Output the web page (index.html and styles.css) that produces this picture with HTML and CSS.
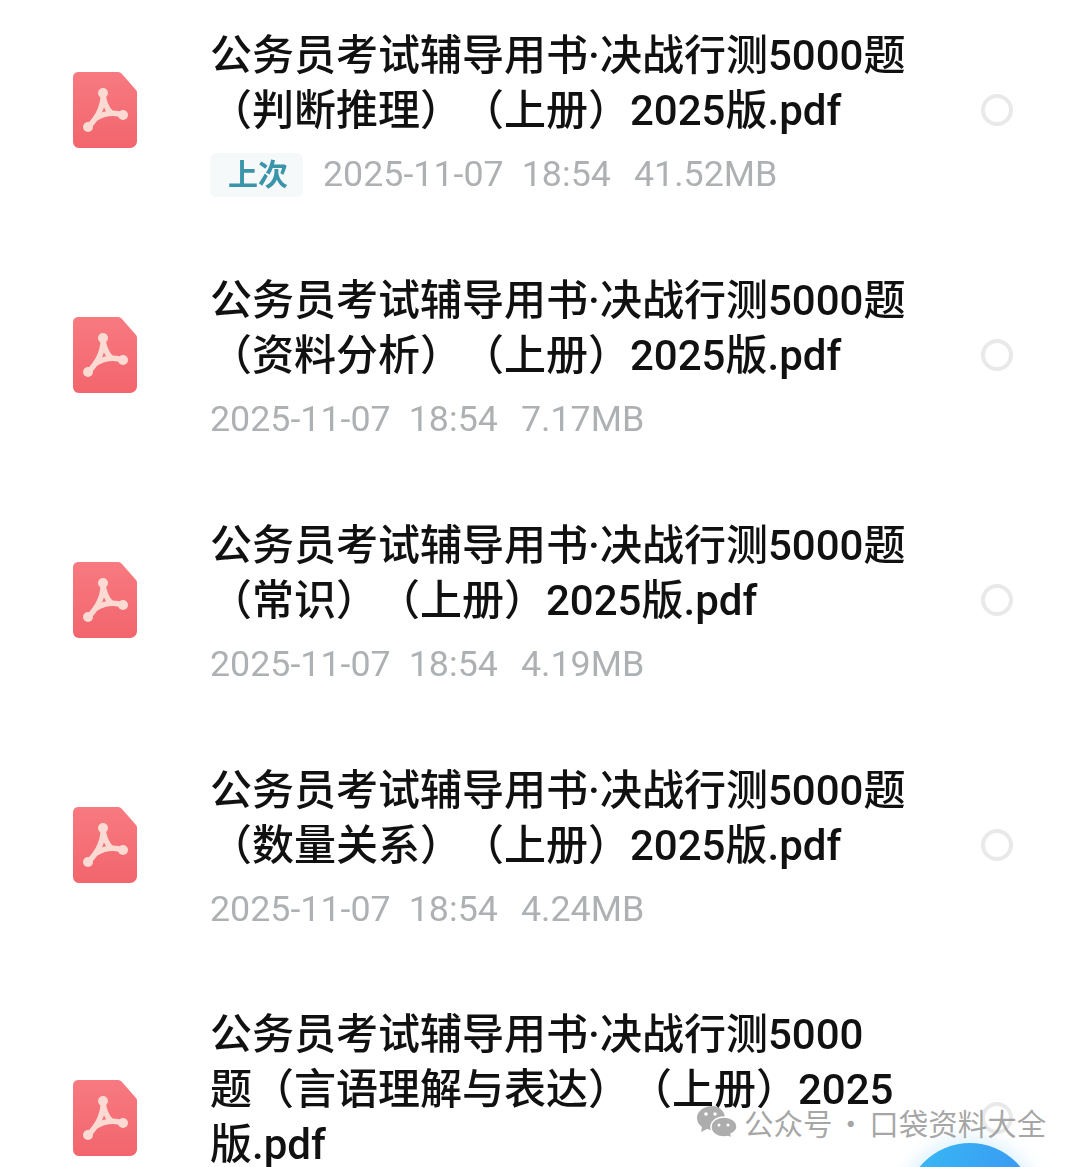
FILE: index.html
```html
<!DOCTYPE html>
<html lang="zh-CN">
  <head>
    <meta charset="UTF-8" />
    <title>文件列表</title>
    <link rel="stylesheet" href="styles.css">
  </head>

  <body>
    <svg class="defs" width="0" height="0">
      <linearGradient id="pdfFill" x1="0" y1="0" x2="0" y2="1">
        <stop offset="0" stop-color="#f77a80" />
        <stop offset="1" stop-color="#f3656d" />
      </linearGradient>
      <symbol id="pdf" viewBox="0 0 66 78">
        <path d="M7 1H46C48 1 49 2 50 3L64 19C65 20 65 21 65 23V70C65 74 62 77 58 77H7C3 77 1 74 1 70V7C1 3 3 1 7 1Z" fill="url(#pdfFill)" />
        <g fill="none" stroke="#fbdad4" stroke-width="5.500" stroke-linecap="round">
          <path d="M31 22C32 31 28 45 16 56" />
          <path d="M31 22C31 30 35 38 39 42" />
          <path d="M24 47C33 42 42 41 51 44" />
        </g>
        <circle cx="31" cy="22" r="5" fill="#fbdad4" />
        <circle cx="51" cy="44" r="5" fill="#fbdad4" />
        <circle cx="16" cy="56" r="5" fill="#fbdad4" />
      </symbol>
    </svg>

    <ul class="file-list">
      <li class="file-row">
        <svg class="file-icon"><use href="#pdf" /></svg>
        <div class="file-text">
          <div class="file-name">公务员考试辅导用书·决战行测5000题<br />（判断推理）（上册）2025版.pdf</div>
          <div class="file-meta">
            <span class="tag">上次</span>
            <span>2025-11-07</span><span>18:54</span><span class="size">41.52MB</span>
          </div>
        </div>
        <span class="radio"></span>
      </li>
      <li class="file-row">
        <svg class="file-icon"><use href="#pdf" /></svg>
        <div class="file-text">
          <div class="file-name">公务员考试辅导用书·决战行测5000题<br />（资料分析）（上册）2025版.pdf</div>
          <div class="file-meta">
            <span>2025-11-07</span><span>18:54</span><span class="size">7.17MB</span>
          </div>
        </div>
        <span class="radio"></span>
      </li>
      <li class="file-row">
        <svg class="file-icon"><use href="#pdf" /></svg>
        <div class="file-text">
          <div class="file-name">公务员考试辅导用书·决战行测5000题<br />（常识）（上册）2025版.pdf</div>
          <div class="file-meta">
            <span>2025-11-07</span><span>18:54</span><span class="size">4.19MB</span>
          </div>
        </div>
        <span class="radio"></span>
      </li>
      <li class="file-row">
        <svg class="file-icon"><use href="#pdf" /></svg>
        <div class="file-text">
          <div class="file-name">公务员考试辅导用书·决战行测5000题<br />（数量关系）（上册）2025版.pdf</div>
          <div class="file-meta">
            <span>2025-11-07</span><span>18:54</span><span class="size">4.24MB</span>
          </div>
        </div>
        <span class="radio"></span>
      </li>
      <li class="file-row last-row">
        <svg class="file-icon"><use href="#pdf" /></svg>
        <div class="file-text">
          <div class="file-name">公务员考试辅导用书·决战行测5000<br />题（言语理解与表达）（上册）2025<br />版.pdf</div>
        </div>
        <span class="radio"></span>
      </li>
    </ul>

    <div class="fab"></div>

    <div class="watermark">
      <svg class="wechat" viewBox="0 0 40 32">
        <path d="M15 0C7 0 0 5 0 12C0 16 2 19 5 21L4 26L10 23C12 23.500 13 24 15 24C22 24 28 18 28 12C28 5 22 0 15 0Z" fill="#adadad" />
        <path d="M27 11C20 11 14 15 14 21C14 27 20 31 27 31C28.500 31 30 31 31 30.500L35 32L34 28C37 26.500 40 24 40 21C40 15 34 11 27 11Z" fill="#adadad" stroke="#fff" stroke-width="1.500" />
        <circle cx="9" cy="8" r="1.800" fill="#fff" />
        <circle cx="18" cy="8" r="1.800" fill="#fff" />
        <circle cx="22" cy="19" r="1.500" fill="#fff" />
        <circle cx="31" cy="19" r="1.500" fill="#fff" />
      </svg>
      <span>公众号 · 口袋资料大全</span>
    </div>
  </body>
</html>
```

FILE: styles.css
```css
* {
  margin: 0;
  padding: 0;
  box-sizing: border-box;
}

html,
body {
  height: 100%;
  overflow: hidden;
  background-color: #fff;
  font-family: Roboto, "Noto Sans CJK SC", sans-serif;
}

body {
  position: relative;
}

.defs {
  display: block;
}

.file-list {
  list-style: none;
  margin-top: -13px;
  filter: blur(0.5px);
}

.file-row {
  display: flex;
  align-items: center;
  height: 245px;
  padding-right: 67px;
  padding-left: 72px;
}

.last-row {
  height: 302px;
}

.file-icon {
  flex: none;
  width: 66px;
  height: 78px;
}

.file-text {
  flex: 1;
  margin-left: 72px;
  padding-top: 4px;
  white-space: nowrap;
}

.last-row .file-text {
  padding-bottom: 62px;
}

.file-name {
  font-size: 42px;
  font-weight: 500;
  line-height: 55px;
  color: #111;
  text-spacing-trim: space-all;
}

.file-meta {
  display: flex;
  align-items: center;
  gap: 18px;
  height: 44px;
  margin-top: 14px;
  font-size: 35.8px;
  color: #aeb1b3;
}

.file-meta .tag {
  height: 44px;
  margin-top: 2px;
  margin-right: 2px;
  padding: 0 15px 0 18px;
  line-height: 44px;
  font-size: 30px;
  font-weight: 700;
  color: #3a94aa;
  background-color: #f5f9fa;
  border-radius: 6px;
}

.file-meta .size {
  margin-left: 5px;
}

.radio {
  flex: none;
  width: 32px;
  height: 32px;
  border: 4px solid #e9e9e9;
  border-radius: 50%;
}

.fab {
  position: absolute;
  left: 905px;
  top: 1143px;
  width: 130px;
  height: 130px;
  border-radius: 50%;
  background: linear-gradient(110deg, #38bcf6, #3a8cf0);
  box-shadow: 0 0 16px 6px rgba(110, 195, 245, 0.22);
}

.watermark {
  position: absolute;
  left: 697px;
  top: 1103px;
  display: flex;
  align-items: center;
  gap: 7px;
  font-size: 29.5px;
  line-height: 38px;
  word-spacing: -3px;
  font-family: "Noto Sans CJK SC", sans-serif;
  color: rgba(150, 150, 150, 0.85);
}

.wechat {
  width: 40px;
  height: 32px;
}
```
